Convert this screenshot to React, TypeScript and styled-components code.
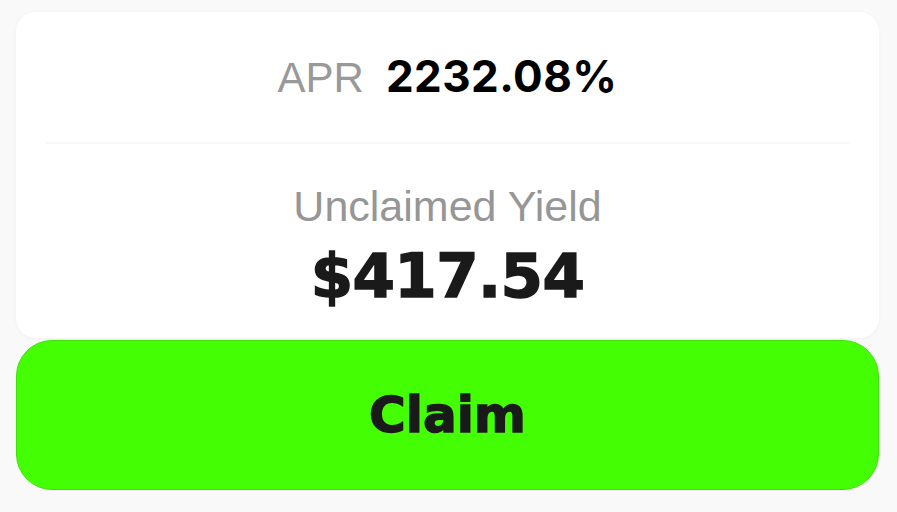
import styled, { createGlobalStyle } from "styled-components";

const GlobalStyle = createGlobalStyle`
  html, body {
    margin: 0;
    padding: 0;
    background: #f9f9f9;
  }
`;

const Page = styled.div`
  display: flex;
  flex-direction: column;
  gap: 2px;
  padding: 12px 18px 0 16px;
  font-family: "Liberation Sans", Arial, sans-serif;
`;

const Card = styled.div`
  display: flex;
  flex-direction: column;
  align-items: center;
  background: #ffffff;
  border-radius: 20px;
  box-shadow: 0 1px 4px rgba(0, 0, 0, 0.04);
  padding: 44px 30px 32px;
`;

const AprRow = styled.div`
  display: flex;
  align-items: baseline;
  gap: 22px;
  height: 40px;
  line-height: 40px;
`;

const AprLabel = styled.span`
  font-size: 42px;
  font-weight: 400;
  color: #999999;
`;

const AprValue = styled.span`
  font-family: Inter, "Noto Sans", sans-serif;
  font-size: 44px;
  font-weight: 700;
  letter-spacing: 0.01em;
  color: #000000;
`;

const Divider = styled.div`
  align-self: stretch;
  height: 2px;
  background: #f7f7f7;
  margin: 46px 0 42px;
`;

const YieldLabel = styled.div`
  font-size: 43px;
  line-height: 40px;
  color: #969696;
`;

const YieldValue = styled.div`
  margin-top: 20px;
  font-family: "DejaVu Sans", sans-serif;
  font-weight: 700;
  font-size: 61px;
  line-height: 60px;
  letter-spacing: -0.01em;
  -webkit-text-stroke: 1.5px #1a1a1a;
  color: #1a1a1a;
`;

const ClaimButton = styled.button`
  height: 150px;
  border: 1px solid #3ee006;
  border-radius: 36px;
  background: #44ff04;
  color: #1a1a1a;
  font-family: "DejaVu Sans", sans-serif;
  font-weight: 700;
  font-size: 50px;
  -webkit-text-stroke: 1.5px #1a1a1a;
  cursor: pointer;
`;

export default function App() {
  return (
    <>
      <GlobalStyle />
      <Page>
        <Card>
          <AprRow>
            <AprLabel>APR</AprLabel>
            <AprValue>2232.08%</AprValue>
          </AprRow>
          <Divider />
          <YieldLabel>Unclaimed Yield</YieldLabel>
          <YieldValue>$417.54</YieldValue>
        </Card>
        <ClaimButton>Claim</ClaimButton>
      </Page>
    </>
  );
}
